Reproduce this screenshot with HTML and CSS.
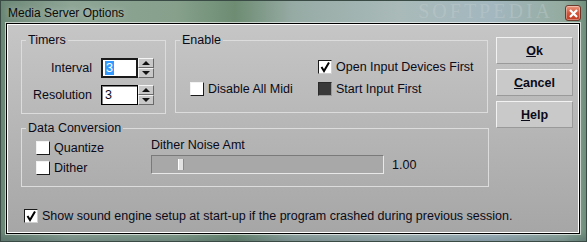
FILE: index.html
```html
<!DOCTYPE html>
<html lang="en">
<head>
    <meta charset="UTF-8">
    <title>Media Server Options</title>
    <link rel="stylesheet" href="styles.css">
</head>
<body>
    <div class="window">
        <div class="titlebar">
            <span class="title">Media Server Options</span>
            <span class="watermark">SOFTPEDIA</span>
            <span class="close">
                <svg width="9" height="9" viewBox="0 0 9 9"><path d="M1 1 L8 8 M8 1 L1 8" stroke="#fff" stroke-width="2.2"/></svg>
            </span>
        </div>

        <div class="client">
            <div class="top">
                <div class="left-col">
                    <div class="row1">
                        <!-- Timers -->
                        <fieldset class="group timers">
                            <legend>Timers</legend>
                            <div class="timer-grid">
                                <span class="lbl">Interval</span>
                                <span class="input focused"><span class="sel">3</span></span>
                                <span class="spin"><span class="up"></span><span class="down"></span></span>
                                <span class="lbl">Resolution</span>
                                <span class="input">3</span>
                                <span class="spin"><span class="up"></span><span class="down"></span></span>
                            </div>
                        </fieldset>

                        <!-- Enable -->
                        <fieldset class="group enable">
                            <legend>Enable</legend>
                            <div class="enable-grid">
                                <span></span>
                                <span class="check"><span class="box on"><svg width="12" height="12" viewBox="0 0 12 12"><path d="M2.5 6 L5 10 L10 1.5" fill="none" stroke="#000" stroke-width="2"/></svg></span>Open Input Devices First</span>
                                <span class="check"><span class="box"></span>Disable All Midi</span>
                                <span class="check"><span class="box dark"></span>Start Input First</span>
                            </div>
                        </fieldset>
                    </div>

                    <!-- Data Conversion -->
                    <fieldset class="group conversion">
                        <legend>Data Conversion</legend>
                        <div class="conv-body">
                            <div class="conv-checks">
                                <span class="check"><span class="box"></span>Quantize</span>
                                <span class="check"><span class="box"></span>Dither</span>
                            </div>
                            <div class="conv-slider">
                                <span class="slider-lbl">Dither Noise Amt</span>
                                <div class="slider-row">
                                    <div class="track"><span class="thumb"></span></div>
                                    <span class="value">1.00</span>
                                </div>
                            </div>
                        </div>
                    </fieldset>
                </div>

                <div class="buttons">
                    <button><u>O</u>k</button>
                    <button><u>C</u>ancel</button>
                    <button><u>H</u>elp</button>
                </div>
            </div>

            <span class="check crash"><span class="box on"><svg width="12" height="12" viewBox="0 0 12 12"><path d="M2.5 6 L5 10 L10 1.5" fill="none" stroke="#000" stroke-width="2"/></svg></span>Show sound engine setup at start-up if the program crashed during previous session.</span>
        </div>
    </div>
</body>
</html>
```

FILE: styles.css
```css
/* Basic reset */
* {
    box-sizing: border-box;
    margin: 0;
    padding: 0;
}
body {
    font-family: 'Liberation Sans', Arial, sans-serif;
    font-size: 12.5px;
    color: #0a0a18;
    width: 587px;
    height: 242px;
    overflow: hidden;
}
/* Window frame */
.window {
    width: 587px;
    height: 242px;
    padding: 0 7px 8px 6px;
    display: flex;
    flex-direction: column;
    background: linear-gradient(90deg, #6d8877 0%, #8ea596 12%, #86a08c 30%, #6d8c72 40%, #97aba5 50%, #a9bab9 68%, #a2b7bf 84%, #93ab9f 96%, #71907d 100%);
    box-shadow: inset 0 0 0 1px #3a4a44, inset 0 -8px 6px -2px rgba(40, 60, 80, 0.25);
}
.titlebar {
    height: 23px;
    display: flex;
    align-items: center;
    padding-left: 2px;
    flex-shrink: 0;
}
.title {
    font-size: 12px;
    color: #0c0c0c;
    margin-top: 2px;
    text-shadow: 0 0 6px rgba(255, 255, 255, 0.45);
}
.watermark {
    margin-left: auto;
    margin-right: 12px;
    font-family: 'Liberation Serif', serif;
    font-size: 20px;
    line-height: 23px;
    letter-spacing: 3px;
    color: rgba(200, 210, 210, 0.35);
}
.close {
    width: 16px;
    height: 16px;
    margin-right: -1px;
    margin-top: 3px;
    border: 1px solid #6b3a2c;
    border-radius: 3px;
    background: linear-gradient(#eb9a82, #d1563b 50%, #c0391f);
    display: flex;
    align-items: center;
    justify-content: center;
    box-shadow: inset 0 0 0 1px rgba(255, 255, 255, 0.35);
}
.close svg {
    display: block;
}
/* Client area */
.client {
    flex: 1;
    border: 1px solid #000;
    padding: 9px 0 0 14px;
    background: linear-gradient(#c6c6c6, #a6a6a6);
    box-shadow: inset 0 0 0 1px #fff, 0 0 0 1px rgba(255, 255, 255, 0.6);
    overflow: hidden;
}
.top {
    display: flex;
}
.left-col {
    display: flex;
    flex-direction: column;
    width: 468px;
}
.row1 {
    display: flex;
    gap: 9px;
}
/* Group boxes */
.group {
    border: 1px solid #dcdcdc;
    min-width: 0;
}
.group legend {
    margin-left: 4px;
    padding: 0 2px;
    line-height: 14px;
}
.timers {
    width: 145px;
    height: 81px;
}
.enable {
    width: 313px;
    height: 80px;
}
.conversion {
    margin-top: 7px;
    height: 66px;
}
/* Timers */
.timer-grid {
    display: grid;
    grid-template-columns: 69px 37px 16px;
    grid-template-rows: 20px 20px;
    row-gap: 7px;
    margin-top: 11px;
    padding-left: 10px;
    align-items: center;
}
.lbl {
    text-align: right;
    padding-right: 9px;
    white-space: nowrap;
}
.input {
    height: 20px;
    background: #fff;
    border: 1px solid #000;
    box-shadow: inset 1px 1px 0 #808080;
    padding: 1px 0 0 3px;
    line-height: 16px;
}
.input.focused {
    border-width: 2px;
    border-color: #1a1a1a;
    box-shadow: none;
    padding: 0 0 0 2px;
}
.sel {
    background: #3399ff;
    color: #fff;
    padding: 0 1px;
    display: inline-block;
    line-height: 14px;
}
.spin {
    height: 20px;
    display: flex;
    flex-direction: column;
}
.spin span {
    flex: 1;
    background: #c8c8c8;
    border-top: 1px solid #f4f4f4;
    border-left: 1px solid #f4f4f4;
    border-right: 1px solid #6a6a6a;
    border-bottom: 1px solid #6a6a6a;
    position: relative;
}
.spin span::after {
    content: '';
    position: absolute;
    left: 3px;
    top: 2px;
    border-left: 4px solid transparent;
    border-right: 4px solid transparent;
}
.spin .up::after {
    border-bottom: 4px solid #111;
}
.spin .down::after {
    border-top: 4px solid #111;
}
/* Checkboxes */
.check {
    display: flex;
    align-items: center;
    height: 14px;
    white-space: nowrap;
}
.box {
    width: 14px;
    height: 14px;
    margin-right: 4px;
    background: #fff;
    border-top: 1px solid #f2f2f2;
    border-left: 1px solid #f2f2f2;
    border-right: 1px solid #1a1a1a;
    border-bottom: 1px solid #1a1a1a;
    display: flex;
    align-items: center;
    justify-content: center;
    flex-shrink: 0;
}
.box.on {
    border-top-color: #1a1a1a;
    border-left-color: #1a1a1a;
    border-right-color: #cfcfcf;
    border-bottom-color: #cfcfcf;
}
.box.dark {
    background: #393939;
    border-color: #2a2a2a;
    border-right-color: #9a9a9a;
    border-bottom-color: #9a9a9a;
}
/* Enable */
.enable-grid {
    display: grid;
    grid-template-columns: 128px auto;
    grid-template-rows: 14px 14px;
    row-gap: 8px;
    margin-top: 13px;
    padding-left: 14px;
}
/* Data conversion */
.conv-body {
    display: flex;
    padding-left: 14px;
}
.conv-checks {
    width: 115px;
    display: flex;
    flex-direction: column;
    gap: 6px;
    margin-top: 6px;
}
.conv-slider {
    display: flex;
    flex-direction: column;
    margin-top: 3px;
}
.slider-lbl {
    line-height: 14px;
}
.slider-row {
    display: flex;
    align-items: center;
    gap: 8px;
    margin-top: 3px;
}
.track {
    width: 233px;
    height: 19px;
    background: #a8a8a8;
    border-top: 1px solid #7a7a7a;
    border-left: 1px solid #7a7a7a;
    border-right: 1px solid #e8e8e8;
    border-bottom: 1px solid #e8e8e8;
    padding: 3px 0 0 26px;
}
.thumb {
    display: block;
    width: 6px;
    height: 11px;
    background: #e2e2e2;
    border-left: 1px solid #fff;
    border-right: 1px solid #8a8a8a;
}
.value {
    margin-top: 1px;
}
/* Buttons */
.buttons {
    display: flex;
    flex-direction: column;
    gap: 5px;
    margin: 4px 0 0 7px;
}
button {
    width: 77px;
    height: 27px;
    font-family: 'Liberation Sans', Arial, sans-serif;
    font-size: 12.5px;
    font-weight: bold;
    color: #0a0a18;
    background: #c9c9c9;
    border-top: 1px solid #f2f2f2;
    border-left: 1px solid #f2f2f2;
    border-right: 1px solid #9a9a9a;
    border-bottom: 1px solid #9a9a9a;
}
/* Bottom option */
.crash {
    margin: 22px 0 0 3px;
}
```
